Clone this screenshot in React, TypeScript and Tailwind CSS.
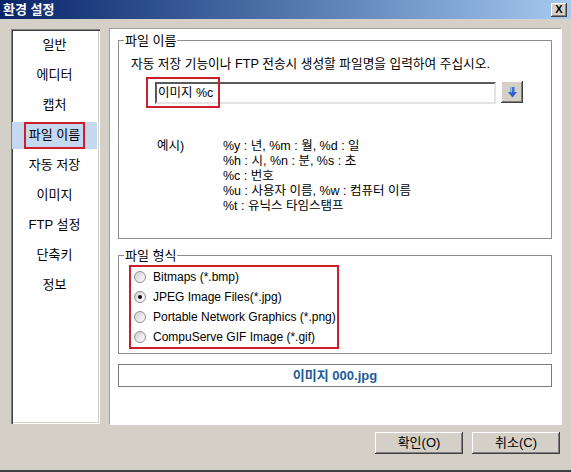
import React from "react";

const items = ["일반", "에디터", "캡처", "파일 이름", "자동 저장", "이미지", "FTP 설정", "단축키", "정보"];

function Radio({ checked, label }: { checked?: boolean; label: string }) {
  return (
    <div className="flex h-[20px] items-center pl-[3px]">
      <div className="flex h-[12px] w-[12px] items-center justify-center rounded-full border border-[#8e8f8f] bg-linear-to-br from-[#d0d0d0] to-white">
        {checked && <div className="h-[4px] w-[4px] rounded-full bg-[#111]" />}
      </div>
      <span className="ml-[7px] text-[12px] leading-[15px]">{label}</span>
    </div>
  );
}

const examples = [
  "%y : 년, %m : 월, %d : 일",
  "%h : 시, %n : 분, %s : 초",
  "%c : 번호",
  "%u : 사용자 이름, %w : 컴퓨터 이름",
  "%t : 유닉스 타임스탬프",
];

export default function App() {
  return (
    <div className="flex h-[472px] w-[571px] flex-col border-b-2 border-[#404040] bg-[#d4d0c8] font-['Liberation_Sans','Noto_Sans_CJK_KR',sans-serif] text-[12px] text-black">
      {/* title bar */}
      <div className="flex h-[19px] items-center justify-between bg-linear-to-r from-[#0a246a] to-[#a6caf0] pl-[3px] pr-[4px]">
        <span className="text-[13px] font-bold leading-none text-white">환경 설정</span>
        <div className="flex h-[14px] w-[16px] items-center justify-center bg-[#d4d0c8] shadow-[inset_-1px_-1px_#404040,inset_1px_1px_#fff,inset_-2px_-2px_#808080]">
          <span className="text-[11px] font-bold leading-none">X</span>
        </div>
      </div>

      {/* main */}
      <div className="mt-[9px] flex h-[397px]">
        {/* left list */}
        <div className="ml-[11px] mt-[1px] flex h-[395px] w-[89px] flex-col bg-white pt-[1px] text-[13px] shadow-[inset_1px_1px_#808080,inset_2px_2px_#404040,inset_-1px_-1px_#fff,inset_-2px_-2px_#d4d0c8]">
          {items.map((it) => (
            <div key={it} className="flex h-[30px] items-center justify-center pl-[1px] pr-[3px]">
              {it === "파일 이름" ? (
                <div className="flex h-[27px] w-full justify-center bg-[#c4d8f0]">
                  <span className="flex h-full items-center border-2 border-[#cc1f2b] px-[3px]">{it}</span>
                </div>
              ) : (
                <span>{it}</span>
              )}
            </div>
          ))}
        </div>

        {/* right panel */}
        <div className="ml-[9px] flex h-[397px] w-[453px] flex-col border border-t-[#a0a0a0] border-l-[#a0a0a0] border-r-white border-b-white bg-white pl-[8px] pr-[9px]">
          <fieldset className="mt-[4px] h-[206px] border border-[#8c8c8c]">
            <legend className="ml-[5px] px-[1px] text-[13px] leading-[15px]">파일 이름</legend>
            <div className="ml-[12px] mt-[9px] text-[12.7px] leading-[15px]">자동 저장 기능이나 FTP 전송시 생성할 파일명을 입력하여 주십시오.</div>
            <div className="ml-[36px] mt-[10px] flex items-start">
              <div className="relative flex h-[22px] w-[341px] items-center border-2 border-t-[#5a5a5a] border-l-[#5a5a5a] border-r-[#e4e4e4] border-b-[#e4e4e4] bg-white pl-[1px]">
                <span className="text-[12.5px]">이미지 %c</span>
                <div className="absolute left-[-11px] top-[-7px] h-[31px] w-[74px] border-2 border-[#cc1f2b]" />
              </div>
              <div className="-mt-[1px] ml-[5px] flex h-[22px] w-[22px] items-center justify-center bg-[#d4d0c8] shadow-[inset_-1px_-1px_#404040,inset_1px_1px_#fff,inset_-2px_-2px_#808080]">
                <svg width="9" height="11" viewBox="0 0 9 11">
                  <rect x="2.5" y="0" width="4" height="5.5" fill="#3a74d8" />
                  <path d="M0 5 H9 L4.5 10.5 Z" fill="#2d63c8" />
                  <rect x="2.5" y="0" width="1.5" height="5.5" fill="#8fb4ee" />
                </svg>
              </div>
            </div>
            <div className="ml-[38px] mt-[35px] flex text-[12.5px] leading-[15px]">
              <div className="w-[66px]">예시)</div>
              <div className="flex flex-col">
                {examples.map((e) => (
                  <div key={e}>{e}</div>
                ))}
              </div>
            </div>
          </fieldset>

          <fieldset className="mt-[9px] h-[106px] border border-[#8c8c8c]">
            <legend className="ml-[5px] px-[1px] text-[13px] leading-[15px]">파일 형식</legend>
            <div className="ml-[10px] mt-[2px] w-[210px] border-2 border-[#cc1f2b]">
              <Radio label="Bitmaps (*.bmp)" />
              <Radio checked label="JPEG Image Files(*.jpg)" />
              <Radio label="Portable Network Graphics (*.png)" />
              <Radio label="CompuServe GIF Image (*.gif)" />
            </div>
          </fieldset>

          <div className="mt-[10px] flex h-[23px] items-center justify-center border border-[#7a7a7a]">
            <span className="text-[13px] font-bold text-[#1d5b9a]">이미지 000.jpg</span>
          </div>
        </div>
      </div>

      {/* buttons */}
      <div className="mt-[7px] flex justify-end gap-[9px] pr-[11px] text-[13px]">
        <button className="flex h-[22px] w-[88px] items-center justify-center bg-[#d4d0c8] shadow-[inset_-1px_-1px_#404040,inset_1px_1px_#fff,inset_-2px_-2px_#808080]">
          확인(O)
        </button>
        <button className="flex h-[22px] w-[88px] items-center justify-center bg-[#d4d0c8] shadow-[inset_-1px_-1px_#404040,inset_1px_1px_#fff,inset_-2px_-2px_#808080]">
          취소(C)
        </button>
      </div>
    </div>
  );
}
